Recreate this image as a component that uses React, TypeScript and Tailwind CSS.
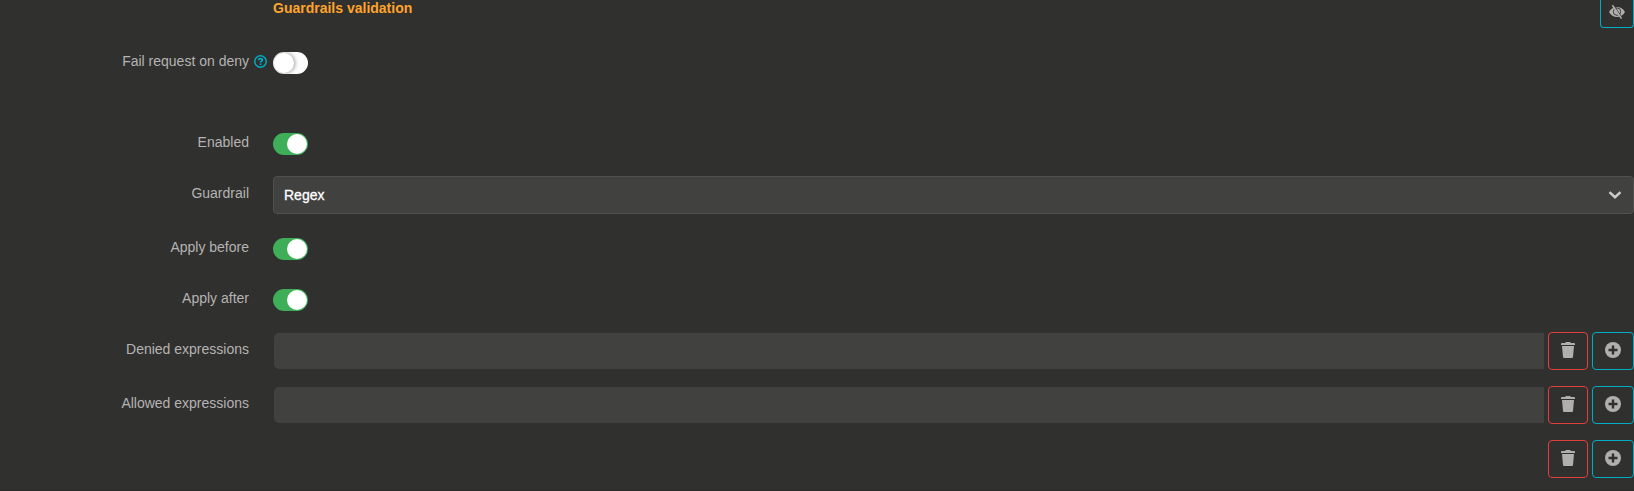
import React from "react";

const BTN = "flex h-[38px] shrink-0 items-center justify-center rounded border bg-[#30302e] pb-[2px]";

function Toggle({ on = false }: { on?: boolean }) {
  return on ? (
    <button className="flex h-[22px] w-[35px] justify-end rounded-full bg-[#3fae58] p-px">
      <span className="size-5 rounded-full bg-white" />
    </button>
  ) : (
    <button className="flex h-[22px] w-[35px] overflow-hidden rounded-full bg-[#fdfdfd] p-px">
      <span className="size-5 rounded-full bg-white shadow-[1px_0_4px_rgba(0,0,0,0.4)]" />
    </button>
  );
}

function EyeClose() {
  return (
    <svg viewBox="0 0 16 16" className="size-4" fill="none" stroke="#b0aeae">
      <path d="M0 8C2 4.700 4.700 3 8 3s6 1.700 8 5C14 11.300 11.300 13 8 13S2 11.300 0 8z" fill="#b0aeae" stroke="none" />
      <circle cx="8" cy="7.600" r="3.700" stroke="#30302e" strokeWidth=".9" />
      <path d="M4.600 1.200l8.900 13" stroke="#30302e" strokeWidth="1" />
      <path d="M3.400 1.200l9.200 13.400" strokeWidth="1.600" />
    </svg>
  );
}

function Trash() {
  return (
    <svg viewBox="0 0 16 16" className="size-4" fill="#b0aeae">
      <path d="M5.500 0h5v1H14q1 0 1 1v1H1V2q0-1 1-1h3.500zM2 4h12l-1 11q-.1 1-1 1H4q-.9 0-1-1z" />
    </svg>
  );
}

function Plus() {
  return (
    <svg viewBox="0 0 16 16" className="size-4">
      <circle cx="8" cy="8" r="8" fill="#b0aeae" />
      <path d="M8 3.500v9M3.500 8h9" stroke="#30302e" strokeWidth="2.400" />
    </svg>
  );
}

function Help() {
  return (
    <svg viewBox="0 0 14 14" className="size-[13px]" fill="none" stroke="#00acc6">
      <circle cx="7" cy="7" r="6.200" strokeWidth="1.600" />
      <path d="M4.900 5.700C5 4.400 5.800 3.900 7 3.900s2.100.6 2.100 1.600C9.100 6.700 7 6.700 7 8.200" strokeWidth="1.800" />
      <path d="M7 9.100v1.700" strokeWidth="1.800" />
    </svg>
  );
}

function Row({ label, help, className, children }: { label?: string; help?: boolean; className: string; children: React.ReactNode }) {
  return (
    <div className={`flex items-start ${className}`}>
      <div className="flex w-[273px] shrink-0 text-[#b5b3b3]">
        <span className="w-[249px] text-right">{label}</span>
        {help && <span className="ml-[5px] pt-[4px]"><Help /></span>}
      </div>
      {children}
    </div>
  );
}

function Actions() {
  return (
    <div className="ml-auto flex gap-1">
      <button className={`${BTN} w-10 border-[#e0403c]`}><Trash /></button>
      <button className={`${BTN} w-[42px] border-[#00acc6]`}><Plus /></button>
    </div>
  );
}

export default function App() {
  return (
    <main className="h-[491px] w-[1634px] overflow-hidden bg-[#30302e] font-['Liberation_Sans',Arial,sans-serif] text-[14px] leading-5">
      <div className="flex h-[52px] items-start justify-between pl-[273px]">
        <h2 className="-mt-[2px] font-bold text-[#ffa32b]">Guardrails validation</h2>
        <button className="flex h-7 w-[34px] justify-center rounded-b border border-t-0 border-[#00acc6] pt-1"><EyeClose /></button>
      </div>
      <Row label="Fail request on deny" help className="h-[81px] [&>div:first-child]:-mt-px"><Toggle /></Row>
      <Row label="Enabled" className="h-[43px] [&>div:first-child]:-mt-px"><Toggle on /></Row>
      <Row label="Guardrail" className="h-[62px] [&>div:first-child]:pt-[7px]">
        <div className="flex h-[38px] flex-1 items-center justify-between rounded border border-[#50504f] bg-[#41413f] pr-[11px] pl-[10px] text-white">
          <span className="[-webkit-text-stroke:0.3px_white]">Regex</span>
          <svg viewBox="0 0 14 8" className="mb-px h-2 w-[14px]" fill="none" stroke="#cccccc" strokeWidth="2.500"><path d="M1.500 1.200L7 6.200l5.500-5" /></svg>
        </div>
      </Row>
      <Row label="Apply before" className="h-[51px] [&>div:first-child]:-mt-px"><Toggle on /></Row>
      <Row label="Apply after" className="h-[43px] [&>div:first-child]:-mt-px"><Toggle on /></Row>
      <Row label="Denied expressions" className="h-[54px] [&>div:first-child]:pt-[7px]">
        <input className="mt-px ml-px h-9 w-[1270px] rounded-l-[5px] bg-[#41413f]" /><Actions />
      </Row>
      <Row label="Allowed expressions" className="h-[54px] [&>div:first-child]:pt-[7px]">
        <input className="mt-px ml-px h-9 w-[1270px] rounded-l-[5px] bg-[#41413f]" /><Actions />
      </Row>
      <Row className="h-[50px]"><Actions /></Row>
      <div className="h-px bg-[#2a2a28]" />
    </main>
  );
}
